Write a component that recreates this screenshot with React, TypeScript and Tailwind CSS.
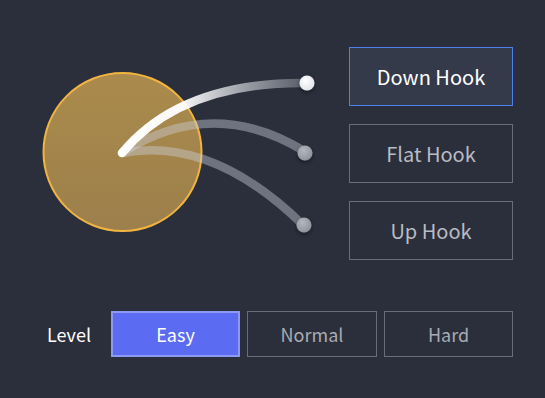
import React from "react";

function Hooks() {
  return (
    <svg width="349" height="213" viewBox="0 47 349 213" className="block">
      <defs>
        <linearGradient id="gold" x1="0" y1="0" x2="0" y2="1">
          <stop offset="0" stopColor="#ab8b4c" />
          <stop offset="1" stopColor="#9c7f4b" />
        </linearGradient>
        <linearGradient id="down" gradientUnits="userSpaceOnUse" x1="122" y1="0" x2="300" y2="0">
          <stop offset="0" stopColor="#ffffff" stopOpacity="1" />
          <stop offset="0.35" stopColor="#ffffff" stopOpacity="0.95" />
          <stop offset="0.7" stopColor="#e4e6ec" stopOpacity="0.6" />
          <stop offset="1" stopColor="#d8dbe3" stopOpacity="0.3" />
        </linearGradient>
        <radialGradient id="dotW" cx="0.4" cy="0.35" r="0.7">
          <stop offset="0" stopColor="#ffffff" />
          <stop offset="1" stopColor="#dfe2ea" />
        </radialGradient>
        <radialGradient id="dotG" cx="0.4" cy="0.35" r="0.7">
          <stop offset="0" stopColor="#b4b7bf" />
          <stop offset="1" stopColor="#8d9099" />
        </radialGradient>
        <filter id="sh" x="-1" y="-1" width="3" height="3">
          <feDropShadow dx="0" dy="2" stdDeviation="2" floodColor="#000" floodOpacity="0.45" />
        </filter>
      </defs>
      <circle cx="122.5" cy="152" r="79" fill="url(#gold)" stroke="#f2b441" strokeWidth="2" />
      <path d="M122 153 Q212 136 303 225" fill="none" stroke="rgba(205,210,222,0.42)" strokeWidth="8.5" strokeLinecap="round" />
      <path d="M122 153 Q212 95 304 151" fill="none" stroke="rgba(205,210,222,0.42)" strokeWidth="8.5" strokeLinecap="round" />
      <path d="M122 153 Q180 83 302 83" fill="none" stroke="url(#down)" strokeWidth="8.5" strokeLinecap="round" />
      <circle cx="307" cy="83" r="7.5" fill="url(#dotW)" filter="url(#sh)" />
      <circle cx="305" cy="153" r="7.5" fill="url(#dotG)" filter="url(#sh)" />
      <circle cx="304" cy="225" r="7.5" fill="url(#dotG)" filter="url(#sh)" />
    </svg>
  );
}

export default function App() {
  const font = { fontFamily: '"Noto Sans CJK SC", "Noto Sans", sans-serif' };
  return (
    <div className="w-[545px] h-[398px] bg-[#2b2f3b] overflow-hidden flex flex-col" style={font}>
      <div className="flex pt-[47px]">
        <Hooks />
        <div className="flex flex-col gap-[18px]">
          <div className="w-[164px] h-[59px] flex items-center justify-center border border-[#4f80ee] bg-[#353a4b] text-white text-[20px]">
            Down Hook
          </div>
          <div className="w-[164px] h-[59px] flex items-center justify-center border border-[#6a6d77] text-[#b9bcc3] text-[20px]">
            Flat Hook
          </div>
          <div className="w-[164px] h-[59px] flex items-center justify-center border border-[#6a6d77] text-[#b9bcc3] text-[20px]">
            Up Hook
          </div>
        </div>
      </div>
      <div className="flex items-center mt-[51px] pl-[47px]">
        <div className="w-[64px] text-white text-[18px]">Level</div>
        <div className="flex gap-[7px]">
          <div className="w-[129px] h-[46px] flex items-center justify-center bg-[#5b6bf2] border-2 border-[#8d99f3] text-white text-[18px]">
            Easy
          </div>
          <div className="w-[130px] h-[46px] flex items-center justify-center border border-[#6a6d77] text-[#a8abb3] text-[18px]">
            Normal
          </div>
          <div className="w-[129px] h-[46px] flex items-center justify-center border border-[#6a6d77] text-[#a8abb3] text-[18px]">
            Hard
          </div>
        </div>
      </div>
    </div>
  );
}
